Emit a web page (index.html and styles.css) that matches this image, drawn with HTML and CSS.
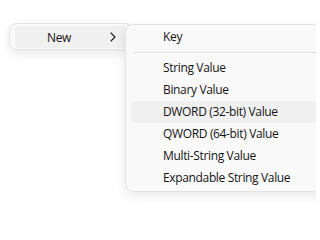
FILE: index.html
```html
<!DOCTYPE html>
<html>
<head>
<meta charset="utf-8">
<link rel="stylesheet" href="styles.css">
</head>
<body>
<div class="stage">
  <div class="menu main">
    <div class="item active">
      <span class="label">New</span>
      <svg class="chev" width="6" height="10" viewBox="0 0 6 10"><path d="M1 1 L5 5 L1 9" fill="none" stroke="#1a1a1a" stroke-width="1.1" stroke-linecap="round" stroke-linejoin="round"/></svg>
    </div>
  </div>
  <div class="menu sub">
    <div class="item">Key</div>
    <div class="sep"></div>
    <div class="item">String Value</div>
    <div class="item">Binary Value</div>
    <div class="item active">DWORD (32-bit) Value</div>
    <div class="item">QWORD (64-bit) Value</div>
    <div class="item">Multi-String Value</div>
    <div class="item">Expandable String Value</div>
  </div>
</div>
</body>
</html>
```

FILE: styles.css
```css
html, body {
  margin: 0;
  background: #ffffff;
}
body {
  font-family: "Segoe UI", "Open Sans", sans-serif;
  font-size: 12px;
  letter-spacing: -0.35px;
  color: #141414;
}
.stage {
  position: relative;
  width: 316px;
  height: 205px;
  overflow: hidden;
  padding-top: 23px;
  padding-left: 9px;
  box-sizing: border-box;
}
.menu {
  background: #f9f9f9;
  border: 1px solid #e3e3e3;
  border-radius: 8px;
  box-sizing: border-box;
  box-shadow: 0 4px 12px rgba(0,0,0,0.09);
}
.main {
  width: 124px;
  height: 27px;
  padding: 2px 5px;
}
.main .item {
  display: flex;
  align-items: center;
  height: 22px;
  border-radius: 4px;
  padding-left: 32px;
  padding-right: 11px;
}
.main .label {
  flex: 1;
}
.chev {
  display: block;
}
.item.active {
  background: #f0f0f0;
}
.sub {
  position: absolute;
  left: 125px;
  top: 24px;
  width: 220px;
  height: 168px;
  padding: 1px 5px;
}
.sub .item {
  height: 22px;
  line-height: 22px;
  border-radius: 4px;
  padding-left: 32px;
  white-space: nowrap;
}
.sep {
  height: 1px;
  background: #e0e0e0;
  margin: 4px 0 4px 2px;
}
```
